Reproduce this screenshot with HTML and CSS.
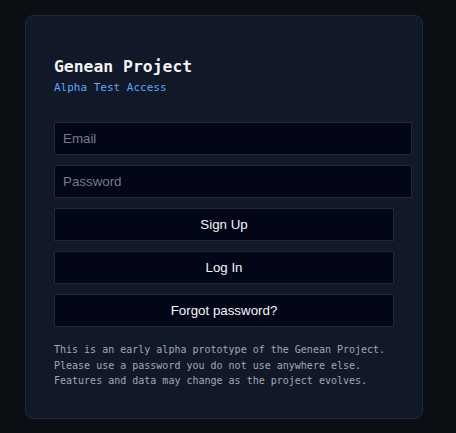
FILE: index.html
```html
<!DOCTYPE html>
<html lang="en">
<head>
<meta charset="utf-8">
<title>Genean Project – Alpha Test Access</title>
<link rel="stylesheet" href="styles.css">
</head>
<body>
<main class="card">
  <h1 class="title">Genean Project</h1>
  <p class="subtitle">Alpha Test Access</p>
  <form class="form">
    <input class="field" type="email" placeholder="Email">
    <input class="field" type="password" placeholder="Password">
    <button class="btn" type="button">Sign Up</button>
    <button class="btn" type="button">Log In</button>
    <button class="btn" type="button">Forgot password?</button>
  </form>
  <p class="note">This is an early alpha prototype of the Genean Project.<br>Please use a password you do not use anywhere else.<br>Features and data may change as the project evolves.</p>
</main>
</body>
</html>
```

FILE: styles.css
```css
html, body {
  margin: 0;
  background: #0b0e13;
}
body {
  padding: 15px 0 0 25px;
  min-height: 433px;
  box-sizing: border-box;
}
.card {
  width: 398px;
  box-sizing: border-box;
  background: #111827;
  border: 1px solid #1f2937;
  border-radius: 8px;
  padding: 41px 28px 29px;
}
.title {
  margin: 0;
  font-family: "DejaVu Sans Mono", monospace;
  font-weight: bold;
  font-size: 16.4px;
  color: #f3f4f6;
}
.subtitle {
  margin: 5px 0 0;
  font-family: "DejaVu Sans Mono", monospace;
  font-size: 11px;
  color: #60a5fa;
}
.form {
  display: flex;
  flex-direction: column;
  align-items: flex-start;
  gap: 10px;
  margin-top: 28px;
}
.field {
  box-sizing: content-box;
  width: 100%;
  height: 31px;
  padding: 0 8px;
  margin: 0;
  border: 1px solid #1f2937;
  border-radius: 0;
  background: #020617;
  color: #e5e7eb;
  font-family: "Liberation Sans", Arial, sans-serif;
  font-size: 13.333px;
  outline: none;
}
.field::placeholder {
  color: #757c89;
}
.btn {
  box-sizing: border-box;
  width: 100%;
  height: 33px;
  margin: 0;
  padding: 0;
  border: 1px solid #1f2937;
  border-radius: 0;
  background: #020617;
  color: #f3f4f6;
  font-family: "Liberation Sans", Arial, sans-serif;
  font-size: 13.333px;
  cursor: pointer;
}
.note {
  margin: 15px 0 0;
  font-family: "DejaVu Sans Mono", monospace;
  font-size: 10px;
  line-height: 15.5px;
  color: #a1a8b5;
}
```
